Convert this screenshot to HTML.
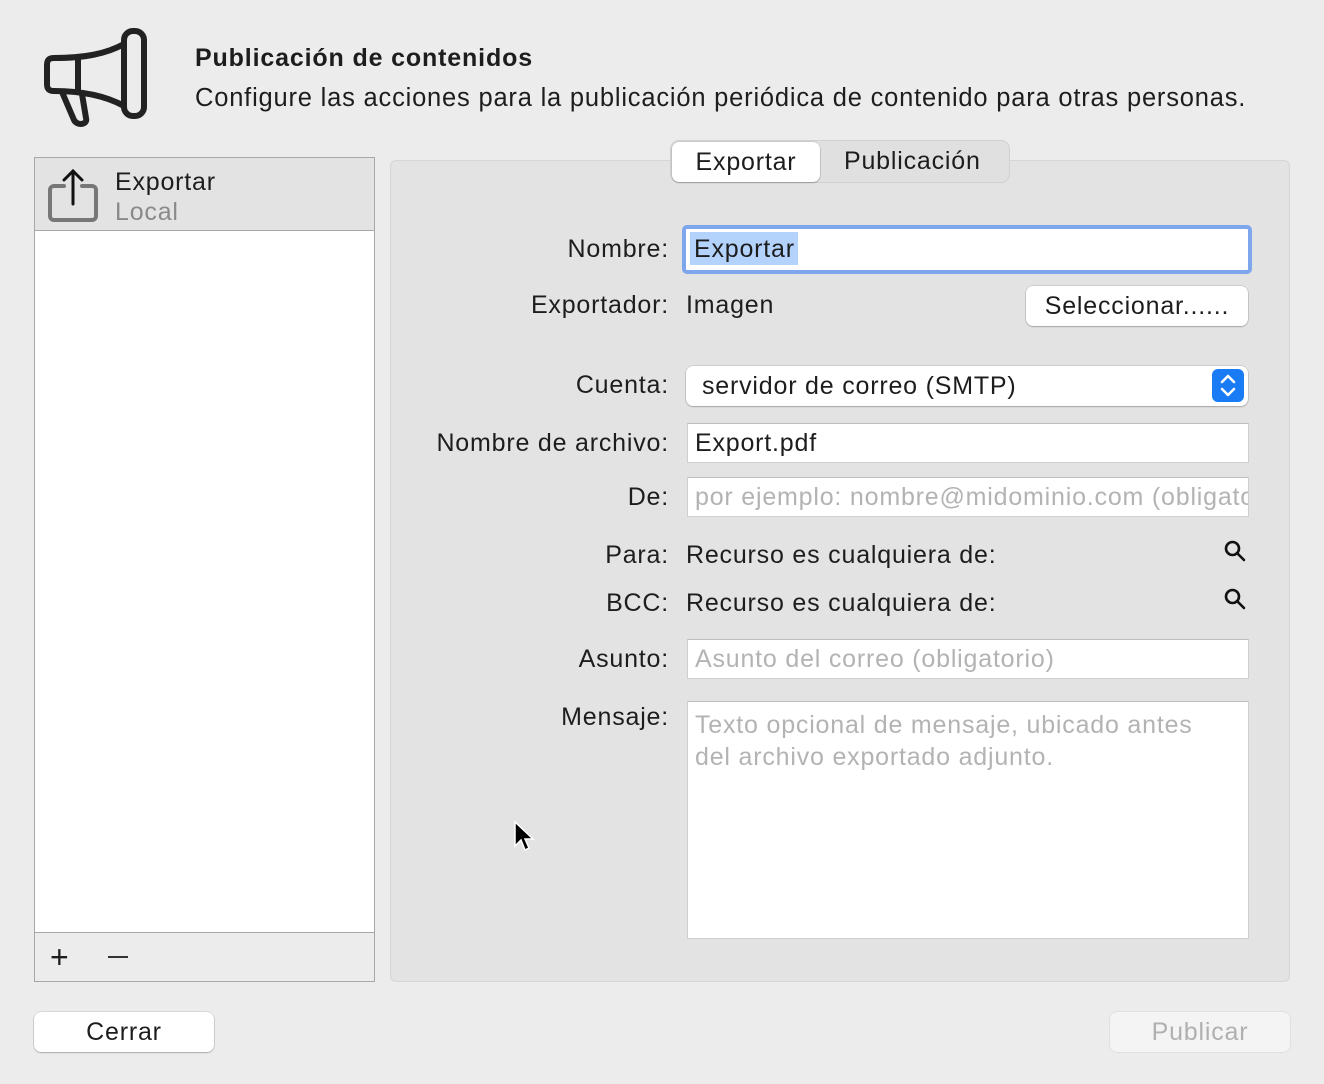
<!DOCTYPE html>
<html><head><meta charset="utf-8"><style>
*{margin:0;padding:0;box-sizing:border-box}
body{width:1324px;height:1084px;background:#ececec;font-family:"Liberation Sans",sans-serif;color:#1d1d1d;position:relative;overflow:hidden;font-size:25px;letter-spacing:0.8px}
.a{position:absolute;white-space:nowrap}
.lbl{position:absolute;right:655px;white-space:nowrap}
.field{position:absolute;background:#fff;border:1px solid #cfcfcf;border-top-color:#bdbdbd}
.ph{color:#b3b3b3}
.btn{position:absolute;background:#fff;border-radius:7px;box-shadow:0 0 0 0.5px rgba(0,0,0,.18),0 1px 1.5px rgba(0,0,0,.2);text-align:center}
</style></head><body>
<svg class="a" style="left:44px;top:28px" width="106" height="100" viewBox="0 0 106 100" fill="none" stroke="#222" stroke-width="6" stroke-linejoin="round" stroke-linecap="round">
<rect x="80" y="3" width="20" height="85" rx="9"/>
<path d="M80 16 C62 26 40 30 10 30 C4 30 3 33 3 37 V56 C3 60 4 63 10 63 C40 63 62 68 80 78"/>
<path d="M34 31 V63"/>
<path d="M18 64 L30 92 C33 98 44 97 42 90 L38 66"/>
</svg>
<div class="a" style="left:195px;top:44px;font-weight:bold;font-size:25px;letter-spacing:0.85px">Publicación de contenidos</div>
<div class="a" style="left:195px;top:84px;font-size:25.5px;letter-spacing:0.8px">Configure las acciones para la publicación periódica de contenido para otras personas.</div>

<div class="a" style="left:34px;top:157px;width:341px;height:825px;background:#fff;border:1px solid #a8a8a8"></div>
<div class="a" style="left:35px;top:158px;width:339px;height:73px;background:#e3e3e3;border-bottom:1px solid #a8a8a8"></div>
<svg class="a" style="left:48px;top:168px" width="52" height="56" viewBox="0 0 52 56" fill="none" stroke-linecap="round">
<path d="M16 18 H6 a4 4 0 0 0-4 4 V48 a4 4 0 0 0 4 4 H44 a4 4 0 0 0 4-4 V22 a4 4 0 0 0-4-4 H34" stroke="#777" stroke-width="4"/>
<path d="M25 36 V3 M16 12 L25 3 L34 12" stroke="#111" stroke-width="3"/>
</svg>
<div class="a" style="left:115px;top:168px">Exportar</div>
<div class="a" style="left:115px;top:198px;color:#8a8a8a">Local</div>
<div class="a" style="left:35px;top:932px;width:339px;height:49px;background:#ececec;border-top:1px solid #a8a8a8"></div>
<div class="a" style="left:50px;top:939px;font-size:32px;font-weight:300">+</div>
<div class="a" style="left:108px;top:956px;width:20px;height:2px;background:#333"></div>

<div class="a" style="left:390px;top:160px;width:900px;height:822px;background:#e3e3e3;border:1px solid #d6d6d6;border-radius:6px"></div>
<div class="a" style="left:670px;top:140px;width:340px;height:43px;background:#e0e0e0;border:1px solid #d0d0d0;border-radius:9px"></div>
<div class="btn" style="left:672px;top:142px;width:148px;height:40px;line-height:40px">Exportar</div>
<div class="a" style="left:844px;top:147px">Publicación</div>

<div class="lbl" style="top:235px">Nombre:</div>
<div class="a" style="left:682px;top:225px;width:570px;height:49px;border:4px solid #7ea6ec;border-radius:5px;background:#fff"></div>
<div class="a" style="left:690px;top:232px;width:108px;height:33px;background:#b3d3fc"></div>
<div class="a" style="left:694px;top:235px">Exportar</div>

<div class="lbl" style="top:291px">Exportador:</div>
<div class="a" style="left:686px;top:291px">Imagen</div>
<div class="btn" style="left:1026px;top:286px;width:222px;height:40px;line-height:40px">Seleccionar......</div>

<div class="lbl" style="top:371px">Cuenta:</div>
<div class="btn" style="left:686px;top:366px;width:562px;height:40px;line-height:40px;text-align:left;padding-left:16px">servidor de correo (SMTP)</div>
<div class="a" style="left:1212px;top:369px;width:32px;height:33px;background:#1a7cf5;border-radius:6px"></div>
<svg class="a" style="left:1212px;top:369px" width="32" height="33" fill="none" stroke="#fff" stroke-width="2.5" stroke-linecap="round" stroke-linejoin="round"><path d="M10 13 L16 7 L22 13 M10 20 L16 26 L22 20"/></svg>

<div class="lbl" style="top:429px">Nombre de archivo:</div>
<div class="field" style="left:687px;top:423px;width:562px;height:40px"></div>
<div class="a" style="left:695px;top:429px">Export.pdf</div>

<div class="lbl" style="top:483px">De:</div>
<div class="field" style="left:687px;top:477px;width:562px;height:40px;overflow:hidden"><div class="a ph" style="left:7px;top:5px">por ejemplo: nombre@midominio.com (obligatorio)</div></div>

<div class="lbl" style="top:541px">Para:</div>
<div class="a" style="left:686px;top:541px">Recurso es cualquiera de:</div>
<div class="lbl" style="top:589px">BCC:</div>
<div class="a" style="left:686px;top:589px">Recurso es cualquiera de:</div>
<svg class="a" style="left:1223px;top:539px" width="24" height="24" fill="none" stroke="#111" stroke-width="2.6" stroke-linecap="round"><circle cx="9.5" cy="9.5" r="6.5"/><path d="M14.5 14.5 L21 21"/></svg>
<svg class="a" style="left:1223px;top:587px" width="24" height="24" fill="none" stroke="#111" stroke-width="2.6" stroke-linecap="round"><circle cx="9.5" cy="9.5" r="6.5"/><path d="M14.5 14.5 L21 21"/></svg>

<div class="lbl" style="top:645px">Asunto:</div>
<div class="field" style="left:687px;top:639px;width:562px;height:40px"><div class="a ph" style="left:7px;top:5px">Asunto del correo (obligatorio)</div></div>

<div class="lbl" style="top:703px">Mensaje:</div>
<div class="field" style="left:687px;top:701px;width:562px;height:238px"><div class="a ph" style="left:7px;top:7px;line-height:32px;white-space:normal;width:515px">Texto opcional de mensaje, ubicado antes del archivo exportado adjunto.</div></div>

<svg class="a" style="left:513px;top:820px" width="24" height="36"><path d="M2 2 L2 26 L8 20 L12 30 L16 28 L12 19 L20 19 Z" fill="#000" stroke="#fff" stroke-width="1.5"/></svg>

<div class="btn" style="left:34px;top:1012px;width:180px;height:40px;line-height:40px">Cerrar</div>
<div class="btn" style="left:1110px;top:1012px;width:180px;height:40px;line-height:40px;background:#f4f4f4;color:#b0b0b0;box-shadow:0 0 0 .5px rgba(0,0,0,.1)">Publicar</div>
</body></html>
